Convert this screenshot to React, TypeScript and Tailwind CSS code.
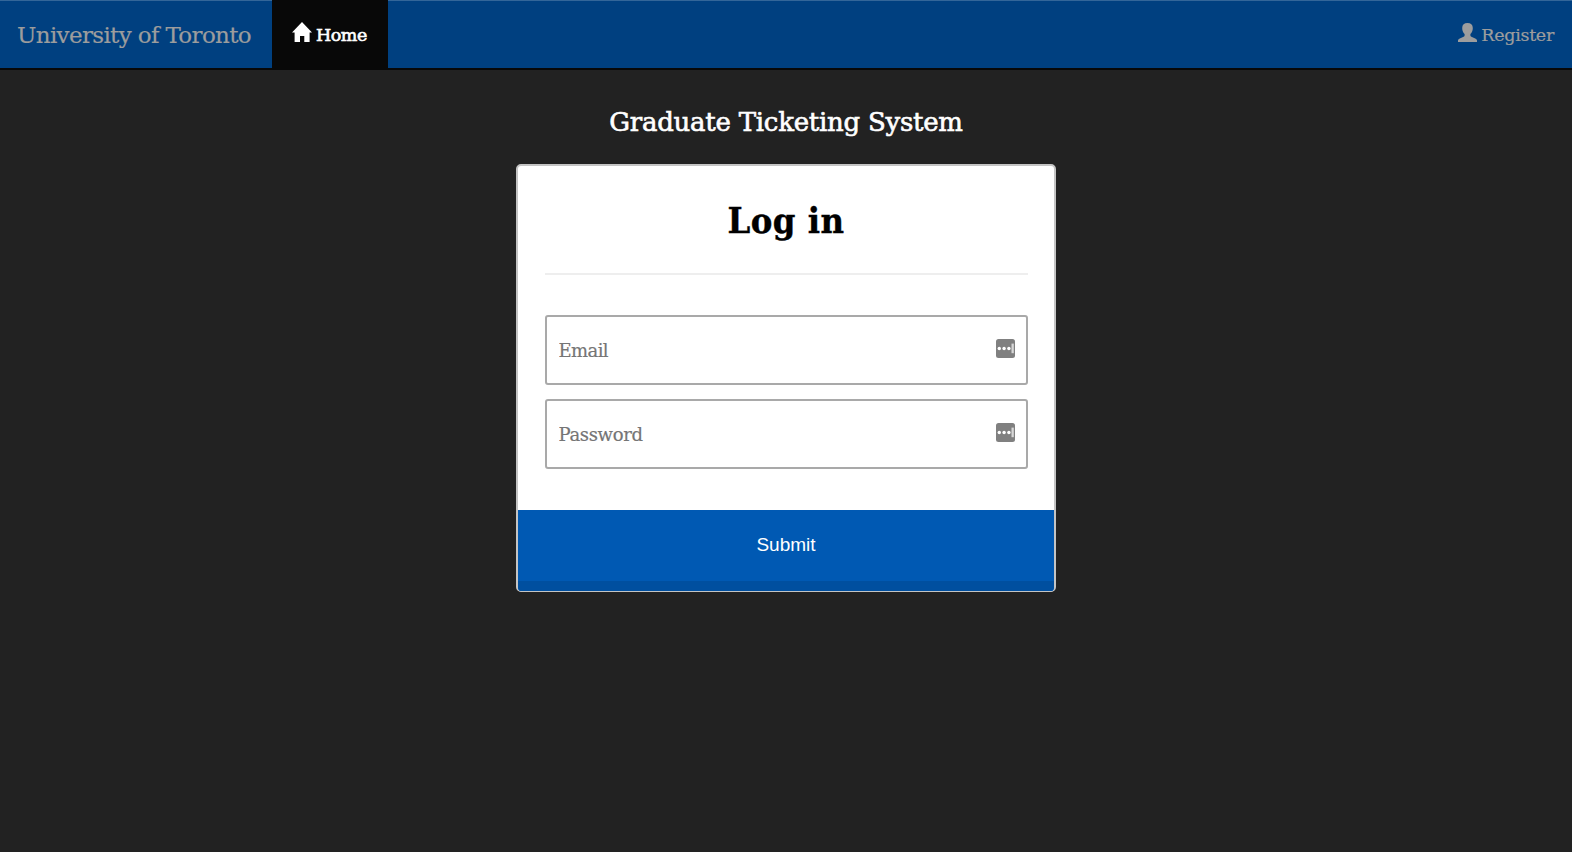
import React from "react";

const slab = "font-['DejaVu_Serif',serif]";

function HomeIcon() {
  return (
    <svg className="h-5 w-5 shrink-0" viewBox="0 0 20 20" fill="currentColor">
      <path d="M10 0 20 10.4H17.6V20H12.3V14H8V20H2.6V10.4H0Z" />
    </svg>
  );
}

function UserIcon() {
  return (
    <svg className="h-[19px] w-[19px] shrink-0" viewBox="0 0 19 19" fill="currentColor">
      <path d="M9.5 0C12.8 0 14.8 1.8 14.8 4.9C14.8 7.6 13.8 9.6 12.4 11V12.6C12.4 13.2 12.8 13.5 13.4 13.8L17.2 15.5C18.5 16.1 19 16.6 19 17.5V19H0V17.5C0 16.6.5 16.1 1.8 15.5L5.6 13.8C6.2 13.5 6.6 13.2 6.6 12.6V11C5.2 9.6 4.2 7.6 4.2 4.9C4.2 1.8 6.2 0 9.5 0Z" />
    </svg>
  );
}

function FillIcon() {
  return (
    <svg className="mt-[-3px] h-[19px] w-[19px] shrink-0" viewBox="0 0 19 19">
      <rect width="19" height="19" rx="2.5" fill="#808080" />
      <circle cx="3.3" cy="9.5" r="1.7" fill="#fff" />
      <circle cx="8.1" cy="9.5" r="1.7" fill="#fff" />
      <circle cx="12.9" cy="9.5" r="1.7" fill="#fff" />
      <rect x="15.5" y="4.6" width="2.3" height="9.6" fill="#d8d8d8" />
    </svg>
  );
}

function Field({ type, label, spacing }: { type: string; label: string; spacing: string }) {
  return (
    <div className="flex h-[70px] items-center rounded-[3px] border-2 border-[#a9a9a9] bg-white pr-[11px] pl-[12px]">
      <input
        type={type}
        placeholder={label}
        className={`min-w-0 flex-1 bg-transparent text-[18px] text-[#757575] outline-none [-webkit-text-stroke:0.2px_#757575] placeholder:text-[#757575] ${spacing} ${slab}`}
      />
      <FillIcon />
    </div>
  );
}

export default function App() {
  return (
    <div className={`h-screen overflow-hidden bg-[#222] ${slab}`}>
      <nav className="flex h-[70px] border-t border-b-2 border-t-[#336699] border-b-[#080808] bg-[#004080] text-[#9d9d9d]">
        <a className="flex w-[272px] items-center pt-[2px] pl-[17px] text-[23px] tracking-[-0.65px] whitespace-nowrap [-webkit-text-stroke:0.2px_currentColor]">University of Toronto</a>
        <a className="-mt-px flex h-[69px] w-[116px] items-center bg-[#080808] pl-[20px] text-[17.5px] text-white">
          <span className="-mt-[5px]"><HomeIcon /></span>
          <span className="mt-px ml-[4px] tracking-[-0.5px] [-webkit-text-stroke:0.6px_currentColor]">Home</span>
        </a>
        <a className="mr-[18px] ml-auto flex items-center text-[17.5px]">
          <span className="-mt-[5px]"><UserIcon /></span>
          <span className="mt-px ml-[4px] tracking-[-0.3px] [-webkit-text-stroke:0.2px_currentColor]">Register</span>
        </a>
      </nav>
      <main className="mx-auto flex w-[540px] flex-col">
        <h1 className="mt-[33px] flex h-[38px] items-center justify-center text-[26px] tracking-[-0.25px] whitespace-nowrap text-white [-webkit-text-stroke:0.6px_currentColor]">
          Graduate Ticketing System
        </h1>
        <form className="mt-[23px] h-[428px] overflow-hidden rounded-[5px] border-2 border-b border-[#c4c4c4] bg-white">
          <h2 className="mt-[31px] flex h-[46px] items-center justify-center font-['DejaVu_Serif_Condensed','DejaVu_Serif',serif] text-[36px] font-bold tracking-[0.5px] text-black [-webkit-text-stroke:0.4px_currentColor]">Log in</h2>
          <hr className="mx-[26.5px] mt-[30px] border-t-2 border-[#eee]" />
          <div className="mx-[26.5px] mt-[40px] flex flex-col gap-[14px]">
            <Field type="email" label="Email" spacing="tracking-[-0.6px]" />
            <Field type="password" label="Password" spacing="tracking-[-0.35px]" />
          </div>
          <button
            type="button"
            className="mt-[41px] block h-[81px] w-full border-b-[10px] border-[#004f9f] bg-[#0059b3] pb-px font-['Liberation_Sans',sans-serif] text-[19px] text-white"
          >
            Submit
          </button>
        </form>
      </main>
    </div>
  );
}
